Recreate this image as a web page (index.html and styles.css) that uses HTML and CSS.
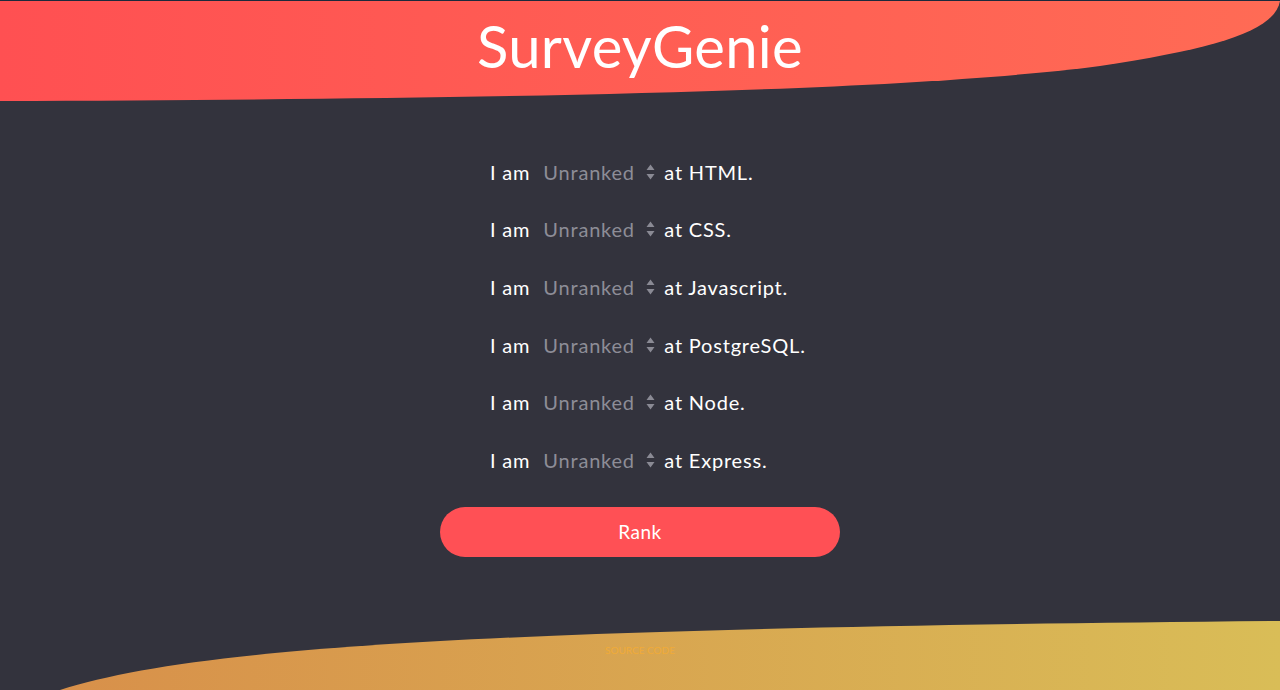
FILE: index.html
```html
<!DOCTYPE html>
<html lang="en">
<head>
    <meta charset="UTF-8">
    <meta name="viewport" content="width=device-width, initial-scale=1.0">
    <title>SurveyGenie</title>
    <link rel="stylesheet" href="styles.css">
</head>
<body>
    <header class="hero">
        <svg class="hero-wave" viewBox="0 0 1280 102" preserveAspectRatio="none">
            <defs>
                <linearGradient id="heroGrad" x1="0" y1="0" x2="1" y2="0">
                    <stop offset="0" stop-color="#ff5052"/>
                    <stop offset="1" stop-color="#ff6b55"/>
                </linearGradient>
            </defs>
            <path d="M0 1 H1280 C1275 30 1220 48 1100 66 C900 92 500 99 0 101 Z" fill="url(#heroGrad)"/>
        </svg>
        <h1 class="logo">SurveyGenie</h1>
    </header>

    <main>
        <form class="survey" id="survey">
        </form>
    </main>

    <footer class="bottom">
        <svg class="bottom-wave" viewBox="0 0 1280 70" preserveAspectRatio="none">
            <defs>
                <linearGradient id="footGrad" x1="0" y1="0" x2="1" y2="0">
                    <stop offset="0" stop-color="#d8904a"/>
                    <stop offset="1" stop-color="#d9bd57"/>
                </linearGradient>
            </defs>
            <path d="M60 70 C200 25 520 8 1280 1 V70 Z" fill="url(#footGrad)"/>
        </svg>
        <a class="source" href="#">SOURCE CODE</a>
    </footer>

    <script>
        const skills = ['HTML', 'CSS', 'Javascript', 'PostgreSQL', 'Node', 'Express'];
        const levels = ['Unranked', 'Beginner', 'Intermediate', 'Advanced', 'Expert'];

        function createRow(skill) {
            const options = levels.map(l => `<option>${l}</option>`).join('');
            return `
                <label class="row">
                    <span>I am</span>
                    <span class="picker">
                        <select name="${skill.toLowerCase()}">${options}</select>
                        <svg class="arrows" viewBox="0 0 9 18"><path d="M4.5 1.5 L8.5 7 H0.5 Z M4.5 16.5 L8.5 11 H0.5 Z" fill="#8a8a94"/></svg>
                    </span>
                    <span>at ${skill}.</span>
                </label>
            `;
        }

        const form = document.getElementById('survey');
        form.innerHTML = skills.map(createRow).join('') + '<button type="submit" class="rank">Rank</button>';
        form.addEventListener('submit', e => e.preventDefault());
    </script>
</body>
</html>
```

FILE: styles.css
```css
* {
    margin: 0;
    padding: 0;
    box-sizing: border-box;
    font-family: Lato, 'Open Sans', sans-serif;
}

body {
    background-color: #33333d;
    color: #ffffff;
    height: 690px;
    overflow: hidden;
    border-top: 1px solid #1d2a3c;
    display: flex;
    flex-direction: column;
}

.hero {
    position: relative;
    height: 100px;
    display: flex;
    justify-content: center;
}

.hero-wave {
    position: absolute;
    top: -1px;
    left: 0;
    width: 100%;
    height: 102px;
}

.logo {
    position: relative;
    font-size: 58px;
    font-weight: 400;
    letter-spacing: 0.3px;
    margin-top: 10px;
}

main {
    flex: 1;
    display: flex;
    justify-content: center;
}

.survey {
    width: 400px;
    margin-top: 42px;
    display: flex;
    flex-direction: column;
}

.row {
    height: 57.6px;
    display: flex;
    align-items: center;
    padding-left: 50px;
    font-size: 20px;
    letter-spacing: 0.8px;
}

.picker {
    display: flex;
    align-items: center;
    margin: 0 9px 0 13px;
}

.picker select {
    appearance: none;
    background: none;
    border: none;
    color: #8d8d97;
    font-size: 20px;
    letter-spacing: 0.8px;
    width: 103px;
    outline: none;
}

.arrows {
    width: 9px;
    height: 18px;
}

.rank {
    margin-top: 18px;
    height: 50px;
    border: none;
    border-radius: 25px;
    background-color: #ff5055;
    color: #ffffff;
    font-size: 19px;
    letter-spacing: 0.5px;
    cursor: pointer;
}

.bottom {
    position: relative;
    height: 70px;
    display: flex;
    justify-content: center;
}

.bottom-wave {
    position: absolute;
    left: 0;
    bottom: 0;
    width: 100%;
    height: 70px;
}

.source {
    position: relative;
    margin-top: 24px;
    font-size: 10px;
    color: #f0ab38;
    text-decoration: none;
}
```
